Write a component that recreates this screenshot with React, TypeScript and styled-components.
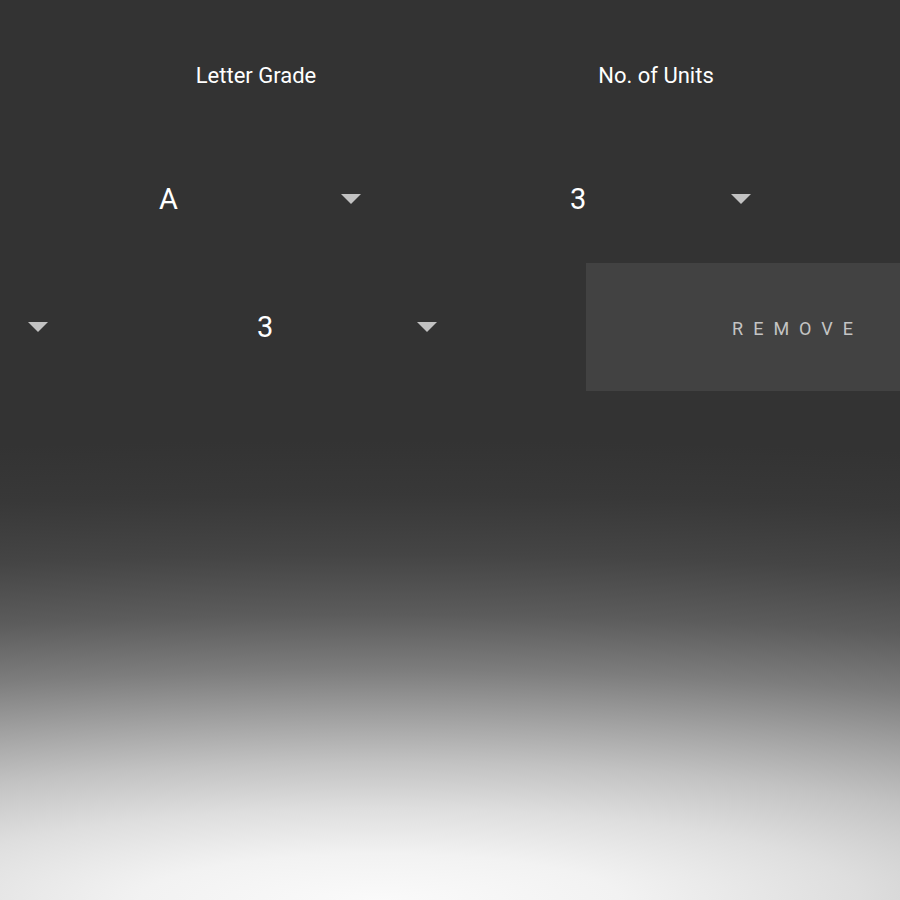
import React from 'react';
import styled, { createGlobalStyle } from 'styled-components';

const GlobalStyle = createGlobalStyle`
  html, body {
    margin: 0;
    padding: 0;
    background: #333333;
  }
  body {
    font-family: Roboto, 'Liberation Sans', sans-serif;
  }
`;

const Page = styled.main`
  min-height: 100vh;
  box-sizing: border-box;
  padding-top: 12px;
  overflow: hidden;
  background: radial-gradient(
    ellipse 2400px 460px at 380px 100%,
    #fafafa 0%,
    #f2f2f2 10%,
    #dedede 20%,
    #c2c2c2 30%,
    #a0a0a0 40%,
    #7d7d7d 50%,
    #5c5c5c 62%,
    #454545 75%,
    #383838 88%,
    #333333 100%
  );
`;

const HeaderRow = styled.div`
  display: grid;
  grid-template-columns: 400px 400px;
  padding-left: 56px;
  height: 128px;
  align-items: center;
`;

const HeaderCell = styled.div`
  text-align: center;
  color: #ffffff;
  font-size: 22px;
  line-height: 26px;
`;

const Row = styled.div<{ $indent: number; $height: number; $lift?: number }>`
  display: flex;
  align-items: center;
  gap: 209px;
  box-sizing: border-box;
  padding-left: ${(p) => p.$indent}px;
  padding-bottom: ${(p) => p.$lift ?? 0}px;
  height: ${(p) => p.$height}px;
`;

const Select = styled.div<{ $width: number }>`
  display: flex;
  align-items: center;
  justify-content: space-between;
  width: ${(p) => p.$width}px;
  flex-shrink: 0;
  cursor: pointer;
`;

const Value = styled.span`
  color: #ffffff;
  font-size: 29px;
  line-height: 34px;
`;

const Arrow = styled.span`
  width: 0;
  height: 0;
  border-left: 10px solid transparent;
  border-right: 10px solid transparent;
  border-top: 10px solid #c2c2c2;
`;

const RemoveButton = styled.button`
  flex: 1;
  align-self: stretch;
  margin-left: -60px;
  display: flex;
  align-items: center;
  justify-content: flex-end;
  padding: 2px 37px 0 0;
  border: none;
  background: #424242;
  color: #c4c4c4;
  font-family: Roboto, 'Liberation Sans', sans-serif;
  font-size: 18px;
  letter-spacing: 10px;
  cursor: pointer;
`;

const App = (): JSX.Element => {
  return (
    <>
      <GlobalStyle />
      <Page>
        <HeaderRow>
          <HeaderCell>Letter Grade</HeaderCell>
          <HeaderCell>No. of Units</HeaderCell>
        </HeaderRow>
        <Row $indent={159} $height={123} $lift={6}>
          <Select $width={202}>
            <Value>A</Value>
            <Arrow />
          </Select>
          <Select $width={181}>
            <Value>3</Value>
            <Arrow />
          </Select>
        </Row>
        <Row $indent={28} $height={128}>
          <Select $width={20}>
            <Arrow />
          </Select>
          <Select $width={180}>
            <Value>3</Value>
            <Arrow />
          </Select>
          <RemoveButton>REMOVE</RemoveButton>
        </Row>
      </Page>
    </>
  );
};

export default App;
